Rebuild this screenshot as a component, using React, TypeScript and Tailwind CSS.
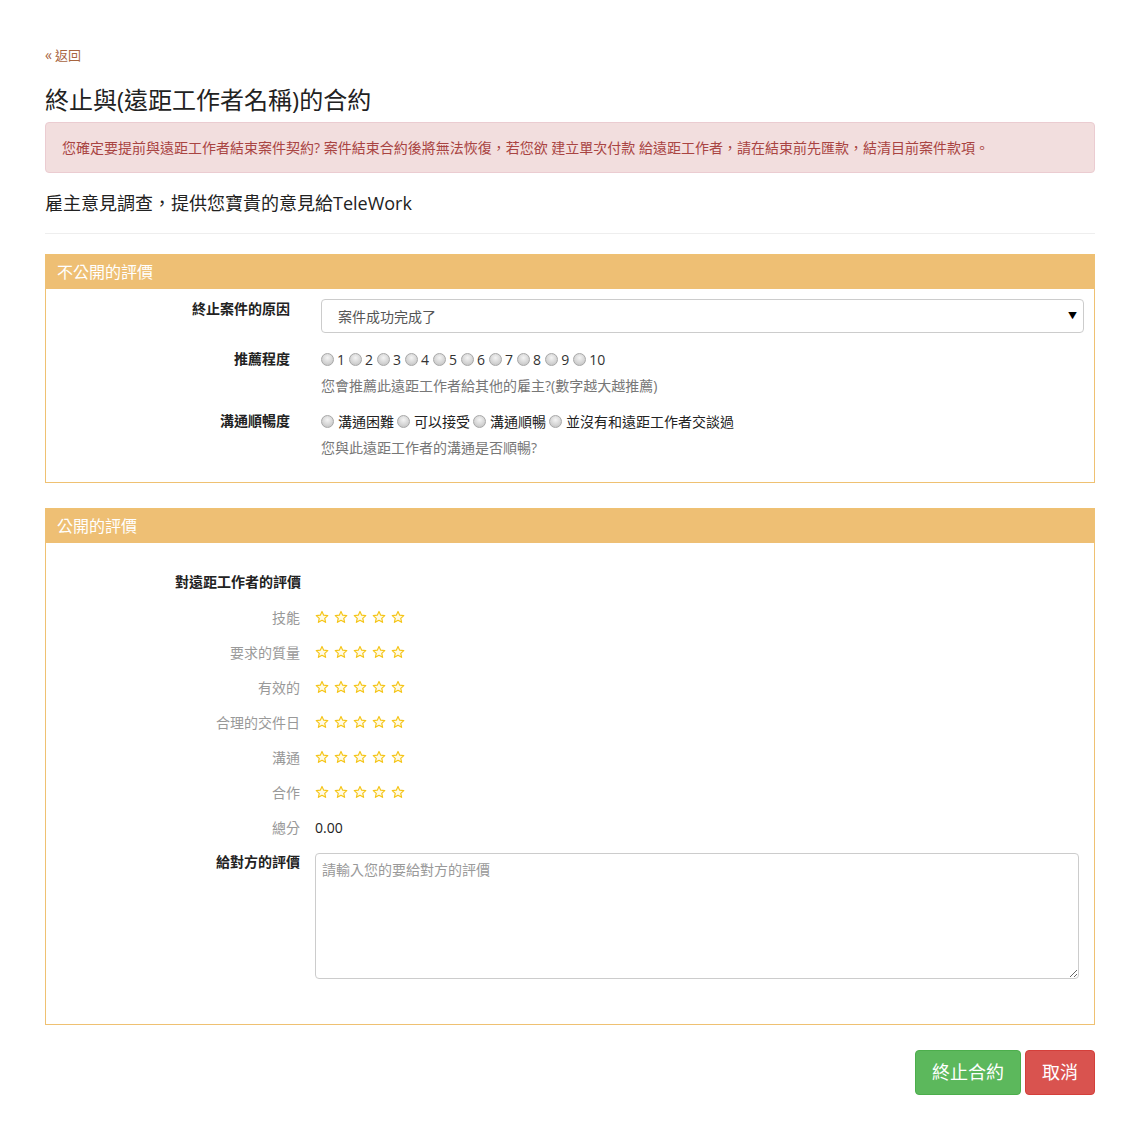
import React from "react";

const font = "font-['Open_Sans','Noto_Sans_CJK_TC',sans-serif]";

const ratingItems = ["技能", "要求的質量", "有效的", "合理的交件日", "溝通", "合作"];
const commOptions = ["溝通困難", "可以接受", "溝通順暢", "並沒有和遠距工作者交談過"];

function Radio() {
  return (
    <span className="inline-block w-[13px] h-[13px] rounded-full border border-[#a8a8a8] bg-[radial-gradient(circle_at_50%_35%,#f4f4f4,#bdbdbd)] shrink-0" />
  );
}

function Star() {
  return (
    <svg width="14" height="14" viewBox="0 0 24 24" className="shrink-0">
      <path
        d="M12 2.5l2.9 6.4 7 .7-5.2 4.7 1.5 6.9L12 17.6l-6.2 3.6 1.5-6.9L2.1 9.6l7-.7z"
        fill="#fffbe6"
        stroke="#f5c518"
        strokeWidth="2"
        strokeLinejoin="round"
      />
    </svg>
  );
}

function PanelHeader({ title }: { title: string }) {
  return (
    <div className="h-[34px] bg-[#eebf74] px-[11px] flex items-center text-white text-[16px] leading-5">{title}</div>
  );
}

export default function App() {
  return (
    <div className={`${font} w-[1140px] bg-white text-[#333] px-[45px] pt-[46px] pb-[44px]`}>
      <a className="flex items-center gap-[3px] text-[13px] leading-[18px] text-[#a8653f]" href="#">
        <span className="text-[14px]">«</span>
        <span>返回</span>
      </a>

      <h1 className="mt-[23px] text-[24px] leading-[26px] text-[#222]">終止與(遠距工作者名稱)的合約</h1>

      <div className="mt-[9px] h-[51px] rounded border border-[#ebccd1] bg-[#f2dede] px-[16px] flex items-center text-[14px] text-[#a94442]">
        您確定要提前與遠距工作者結束案件契約? 案件結束合約後將無法恢復，若您欲 建立單次付款 給遠距工作者，請在結束前先匯款，結清目前案件款項。
      </div>

      <h3 className="mt-[20px] text-[18px] leading-5 text-[#222]">雇主意見調查，提供您寶貴的意見給TeleWork</h3>
      <hr className="mt-[20px] border-0 border-t border-[#eee]" />

      {/* private review */}
      <div className="mt-[20px] border border-[#efc172]">
        <PanelHeader title="不公開的評價" />
        <div className="pt-[10px] pb-[24px] pr-[10px] flex flex-col">
          <div className="flex gap-[31px]">
            <div className="w-[244px] text-right text-[14px] leading-5 font-bold text-[#222]">終止案件的原因</div>
            <div className="flex-1 h-[34px] rounded border border-[#ccc] flex items-center justify-between pl-[16px] pr-[6px] text-[14px] text-[#555]">
              <span>案件成功完成了</span>
              <span className="text-[9px] text-black">▼</span>
            </div>
          </div>

          <div className="mt-[16px] flex gap-[31px]">
            <div className="w-[244px] text-right text-[14px] leading-5 font-bold text-[#222]">推薦程度</div>
            <div className="flex-1 flex flex-col">
              <div className="flex items-center h-5 text-[14px]">
                {[1, 2, 3, 4, 5, 6, 7, 8, 9, 10].map((n) => (
                  <span key={n} className="flex items-center gap-[3px] mr-[4px]">
                    <Radio />
                    <span>{n}</span>
                  </span>
                ))}
              </div>
              <div className="mt-[7px] text-[14px] leading-5 text-[#777]">您會推薦此遠距工作者給其他的雇主?(數字越大越推薦)</div>
            </div>
          </div>

          <div className="mt-[15px] flex gap-[31px]">
            <div className="w-[244px] text-right text-[14px] leading-5 font-bold text-[#222]">溝通順暢度</div>
            <div className="flex-1 flex flex-col">
              <div className="flex items-center h-5 text-[14px] text-[#222]">
                {commOptions.map((o) => (
                  <span key={o} className="flex items-center gap-[4px] mr-[3px]">
                    <Radio />
                    <span>{o}</span>
                  </span>
                ))}
              </div>
              <div className="mt-[7px] text-[14px] leading-5 text-[#777]">您與此遠距工作者的溝通是否順暢?</div>
            </div>
          </div>
        </div>
      </div>

      {/* public review */}
      <div className="mt-[25px] border border-[#efc172]">
        <PanelHeader title="公開的評價" />
        <div className="pt-[29px] pb-[45px] pr-[15px] flex flex-col gap-[15px]">
          <div className="pl-[129px] text-[14px] leading-5 font-bold text-[#222]">對遠距工作者的評價</div>
          {ratingItems.map((r) => (
            <div key={r} className="flex items-center gap-[15px] h-5">
              <div className="w-[254px] text-right text-[14px] text-[#999]">{r}</div>
              <div className="flex items-center gap-[5px]">
                {[0, 1, 2, 3, 4].map((i) => (
                  <Star key={i} />
                ))}
              </div>
            </div>
          ))}
          <div className="flex items-center gap-[15px] h-5">
            <div className="w-[254px] text-right text-[14px] text-[#999]">總分</div>
            <div className="text-[14px] text-[#222]">0.00</div>
          </div>
          <div className="flex gap-[15px]">
            <div className="w-[254px] text-right text-[14px] leading-5 font-bold text-[#222]">給對方的評價</div>
            <textarea
              className="flex-1 h-[126px] mt-[1px] rounded border border-[#ccc] px-[6px] py-[6px] text-[14px] leading-5 outline-none placeholder:text-[#999]"
              placeholder="請輸入您的要給對方的評價"
            />
          </div>
        </div>
      </div>

      <div className="mt-[25px] flex justify-end gap-[4px]">
        <button className="h-[45px] px-[16px] rounded bg-[#5cb85c] border border-[#4cae4c] text-white text-[18px]">終止合約</button>
        <button className="h-[45px] px-[16px] rounded bg-[#d9534f] border border-[#d43f3a] text-white text-[18px]">取消</button>
      </div>
    </div>
  );
}
